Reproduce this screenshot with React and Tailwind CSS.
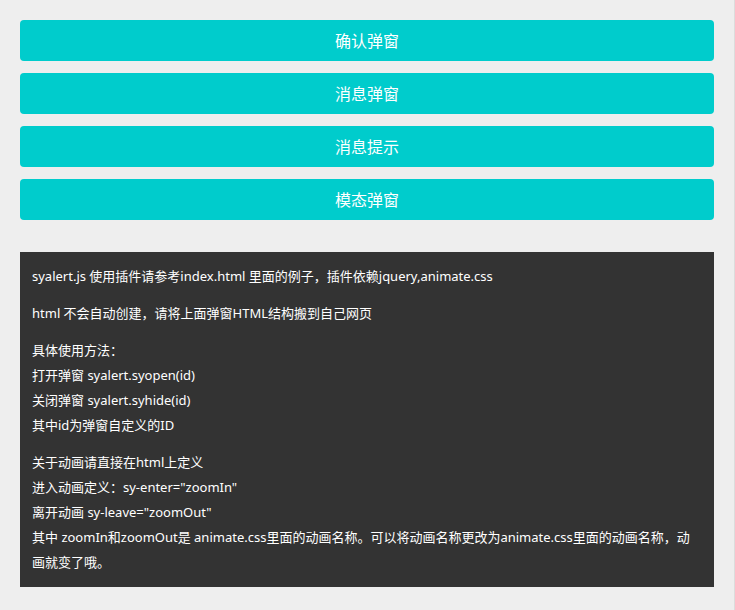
const buttons = ['确认弹窗', '消息弹窗', '消息提示', '模态弹窗']

export default function App() {
  return (
    <div
      className="min-h-screen bg-[#eeeeee] border-r border-[#dcdcdc] px-5 pt-5 pb-6"
      style={{ fontFamily: '"Noto Sans", "Noto Sans CJK SC", sans-serif' }}
    >
      <div className="flex flex-col gap-3">
        {buttons.map((label) => (
          <button
            key={label}
            className="h-[41px] w-full rounded bg-[#00cccc] text-white text-base"
          >
            {label}
          </button>
        ))}
      </div>

      <div className="mt-8 bg-[#333333] px-3 py-3 text-[13px] leading-[25px] text-white flex flex-col gap-3">
        <p>syalert.js 使用插件请参考index.html 里面的例子，插件依赖jquery,animate.css</p>
        <p>html 不会自动创建，请将上面弹窗HTML结构搬到自己网页</p>
        <p>
          具体使用方法：
          <br />
          打开弹窗 syalert.syopen(id)
          <br />
          关闭弹窗 syalert.syhide(id)
          <br />
          其中id为弹窗自定义的ID
        </p>
        <p>
          关于动画请直接在html上定义
          <br />
          进入动画定义：sy-enter="zoomIn"
          <br />
          离开动画 sy-leave="zoomOut"
          <br />
          其中 zoomIn和zoomOut是 animate.css里面的动画名称。可以将动画名称更改为animate.css里面的动画名称，动画就变了哦。
        </p>
      </div>
    </div>
  )
}
